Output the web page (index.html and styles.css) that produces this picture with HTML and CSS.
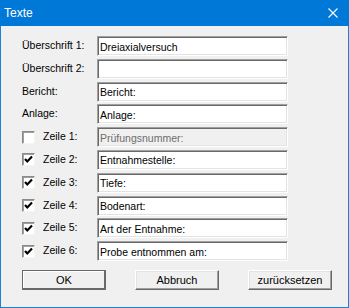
FILE: index.html
```html
<!DOCTYPE html>
<html lang="de">
<head>
    <meta charset="UTF-8">
    <title>Texte</title>
    <link rel="stylesheet" href="styles.css">
</head>
<body>
    <div class="window">
        <div class="titlebar">
            <span class="title">Texte</span>
            <svg class="close" width="10" height="10" viewBox="0 0 10 10">
                <path d="M0.5 0.5 L9.5 9.5 M9.5 0.5 L0.5 9.5" stroke="#fff" stroke-width="1.1" fill="none"/>
            </svg>
        </div>
        <div class="content">
            <div class="form">
                <div class="lbl">Überschrift 1:</div>
                <div class="field">Dreiaxialversuch</div>

                <div class="lbl">Überschrift 2:</div>
                <div class="field"></div>

                <div class="lbl">Bericht:</div>
                <div class="field">Bericht:</div>

                <div class="lbl">Anlage:</div>
                <div class="field">Anlage:</div>

                <div class="lbl"><span class="box"></span>Zeile 1:</div>
                <div class="field disabled">Prüfungsnummer:</div>

                <div class="lbl"><span class="box"><svg width="11" height="11" viewBox="0 0 11 11"><polyline points="2,5 4.3,7.5 9,2.6" fill="none" stroke="#000" stroke-width="2.2"/></svg></span>Zeile 2:</div>
                <div class="field">Entnahmestelle:</div>

                <div class="lbl"><span class="box"><svg width="11" height="11" viewBox="0 0 11 11"><polyline points="2,5 4.3,7.5 9,2.6" fill="none" stroke="#000" stroke-width="2.2"/></svg></span>Zeile 3:</div>
                <div class="field">Tiefe:</div>

                <div class="lbl"><span class="box"><svg width="11" height="11" viewBox="0 0 11 11"><polyline points="2,5 4.3,7.5 9,2.6" fill="none" stroke="#000" stroke-width="2.2"/></svg></span>Zeile 4:</div>
                <div class="field">Bodenart:</div>

                <div class="lbl"><span class="box"><svg width="11" height="11" viewBox="0 0 11 11"><polyline points="2,5 4.3,7.5 9,2.6" fill="none" stroke="#000" stroke-width="2.2"/></svg></span>Zeile 5:</div>
                <div class="field">Art der Entnahme:</div>

                <div class="lbl"><span class="box"><svg width="11" height="11" viewBox="0 0 11 11"><polyline points="2,5 4.3,7.5 9,2.6" fill="none" stroke="#000" stroke-width="2.2"/></svg></span>Zeile 6:</div>
                <div class="field">Probe entnommen am:</div>
            </div>
            <div class="buttons">
                <div class="btn default">OK</div>
                <div class="btn">Abbruch</div>
                <div class="btn">zurücksetzen</div>
            </div>
        </div>
    </div>
</body>
</html>
```
FILE: styles.css
```css
body {
    margin: 0;
    font-family: "Liberation Sans", Arial, sans-serif;
    font-size: 10.5px;
    color: #000;
}
.window {
    width: 349px;
    height: 308px;
    display: flex;
    flex-direction: column;
}
.titlebar {
    height: 26px;
    background: #0078d7;
    color: #fff;
    display: flex;
    align-items: center;
    justify-content: space-between;
    padding: 0 11px 0 4px;
    flex-shrink: 0;
}
.title {
    font-size: 12px;
    padding-bottom: 1px;
}
.content {
    flex: 1;
    background: #f0f0f0;
    border: 1px solid #1883d7;
    border-top: 0;
    padding: 10px 0 0 21px;
}
.form {
    display: grid;
    grid-template-columns: 75px 191px;
    grid-auto-rows: 20px;
    row-gap: 2.8px;
}
.lbl {
    display: flex;
    align-items: center;
    padding-bottom: 2px;
}
.box {
    width: 11px;
    height: 11px;
    margin-right: 8px;
    background: #fff;
    border: 1px solid;
    border-color: #8a8a8a #f4f4f4 #f4f4f4 #8a8a8a;
    box-shadow: inset 1px 1px #a0a0a0;
    display: flex;
    margin-top: 2px;
}
.field {
    background: #fff;
    border: 1px solid;
    border-color: #a0a0a0 #fff #fff #a0a0a0;
    box-shadow: inset 1px 1px #696969, inset -1px -1px #e3e3e3;
    padding: 1px 0 0 2px;
    display: flex;
    align-items: center;
    white-space: nowrap;
    overflow: hidden;
}
.field.disabled {
    background: #f0f0f0;
    color: #6d6d6d;
}
.buttons {
    display: flex;
    gap: 29px;
    margin-top: 9px;
}
.btn {
    width: 84px;
    height: 20px;
    box-sizing: border-box;
    display: flex;
    align-items: center;
    justify-content: center;
    background: #f0f0f0;
    border: 1px solid;
    border-color: #fff #696969 #696969 #fff;
    box-shadow: inset -1px -1px #a0a0a0, inset 1px 1px #e3e3e3;
    font-size: 11px;
}
.btn.default {
    border-color: #696969;
    box-shadow: inset -1px -1px #696969, inset 1px 1px #fff;
}
```
